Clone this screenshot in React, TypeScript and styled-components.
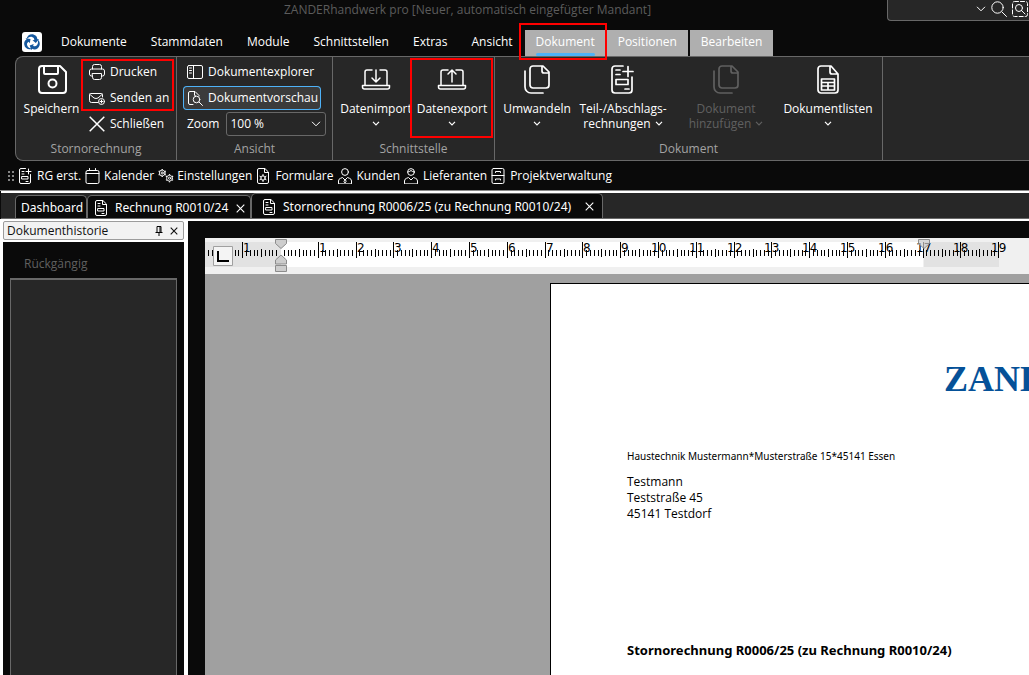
import React from 'react';
import styled, { createGlobalStyle, css } from 'styled-components';

const Global = createGlobalStyle`
  * { box-sizing: border-box; }
  html, body, #root { height: 100%; margin: 0; }
  body { background: #0a0a0a; color: #fff; overflow: hidden; font: 12px/16px "Open Sans", "Noto Sans", sans-serif; }
  button, input, select { font: inherit; color: inherit; margin: 0; }
  button { background: none; border: 0; padding: 0; white-space: nowrap; }
  svg { display: block; flex: none; }
`;

const Shell = styled.div`display: flex; flex-direction: column; height: 100%;`;

const TitleBar = styled.header`
  display: grid; grid-template-columns: 1fr auto 1fr; height: 28px; flex: none; color: #5c5c5c;
`;
const Title = styled.h1`
  margin: 0; padding: 2px 94px 0 0; font-size: 12px; font-weight: 400; line-height: 16px; white-space: nowrap;
`;
const SearchBox = styled.div`
  justify-self: end; display: flex; align-items: center; gap: 5px; width: 142px; height: 21px;
  padding: 0 1px 2px 4px; background: #272727; border: solid #686868; border-width: 0 0 1px 1px;
  border-radius: 0 0 0 4px; color: #fff;
`;
const SearchInput = styled.input`flex: 1; min-width: 0; border: 0; padding: 0; background: transparent; outline: 0;`;

const MenuBar = styled.nav`display: flex; align-items: flex-end; height: 28px; flex: none; padding-left: 22px;`;
const AppLogo = styled.button`align-self: center; width: 20px; height: 20px; margin-right: 7px;`;
const MenuTab = styled.button`height: 28px; padding: 0 12px;`;
const ContextTabs = styled.div`display: flex; gap: 2px;`;
const ContextTab = styled.button<{ $active?: boolean }>`
  position: relative; height: 26px; padding: 0 11px 2px; background: #afafaf;
  ${p => p.$active && css`
    margin-right: -2px; padding-right: 12px;
    &::before { content: ''; position: absolute; left: 11px; right: 12px; bottom: 0; height: 3px; border-radius: 2px; background: #4eb2f8; z-index: 1; }
  `}
`;
const Mark = styled.span<{ $inset: string; $height?: number }>`
  position: absolute; inset: ${p => p.$inset}; border: 2px solid #f00; pointer-events: none; z-index: 3;
  ${p => p.$height && css`height: ${p.$height}px;`}
`;

const Ribbon = styled.section`
  display: flex; height: 105px; flex: none; margin-left: 15px; background: #272727;
  border: solid #686868; border-width: 1px 0 1px 1px; border-radius: 8px 0 0 8px;
`;
const Group = styled.div<{ $width: number }>`
  display: flex; flex-direction: column; flex: none; width: ${p => p.$width}px; border-right: 1px solid #686868;
`;
const GroupBody = styled.div<{ $pad?: string }>`display: flex; flex: 1; padding: ${p => p.$pad ?? '0'};`;
const GroupLabel = styled.div`height: 19px; line-height: 16px; text-align: center; color: #a3a3a3;`;
const BigButton = styled.button<{ $width: number; $dim?: boolean }>`
  position: relative; display: flex; flex-direction: column; align-items: center; width: ${p => p.$width}px; flex: none;
  padding-top: 8px; line-height: 15px; color: ${p => (p.$dim ? '#606060' : '#fff')};
  & > svg:first-child { margin-bottom: 6px; }
`;
const SecondLine = styled.span`display: flex; align-items: center; justify-content: center; gap: 4px; height: 15px;`;
const Divider = styled.div<{ $gap?: number }>`width: 1px; margin: 5px 0 5px ${p => p.$gap ?? 0}px; background: #686868;`;
const Stack = styled.div`position: relative; display: flex; flex-direction: column; padding-top: 2px;`;
const SmallButton = styled.button<{ $on?: boolean }>`
  display: flex; align-items: center; gap: 5px; height: 26px; padding: 0 2px 0 4px; text-align: left;
  ${p => p.$on && css`
    height: 24px; margin: 1px 0; padding-right: 3px; border-radius: 4px; background: #3b3b3b; box-shadow: inset 0 0 0 1px #4eb2f8;
  `}
`;
const ZoomRow = styled.label`display: flex; align-items: center; gap: 7px; height: 26px; padding-left: 4px;`;
const SelectWrap = styled.span`
  position: relative; width: 100px; flex: none; margin-right: -12px;
  & > svg { position: absolute; right: 5px; top: 9px; pointer-events: none; }
`;
const Select = styled.select`
  display: block; width: 100%; height: 24px; padding: 0 3px; appearance: none; background: #272727; border: 1px solid #686868; border-radius: 3px;
`;

const QuickBar = styled.nav`
  display: flex; align-items: center; gap: 4px; height: 30px; flex: none; padding-left: 6px;
  border-bottom: 1px solid #8a8a8a;
`;
const QuickButton = styled.button`display: flex; align-items: center; gap: 3px;`;

const DocTabs = styled.div`
  display: flex; align-items: flex-end; height: 28px; flex: none; margin-left: 1px; padding-left: 14px;
  background: #272727; border-top: 2px solid #fff; border-bottom: 1px solid #686868; font-family: "Noto Sans", sans-serif;
`;
const DocTab = styled.div<{ $active?: boolean; $width: number }>`
  display: flex; align-items: center; justify-content: space-between; flex: none; width: ${p => p.$width}px;
  height: ${p => (p.$active ? 25 : 23)}px; padding: ${p => (p.$active ? '1px 8px 0 9px' : '2px 5px 0')};
  background: #0a0a0a; border: solid #686868; border-width: 1px 1px 0 1px; border-radius: 5px 5px 0 0;
`;
const TabTitle = styled.button`display: flex; align-items: center; gap: 6px;`;

const Main = styled.main`display: flex; flex: 1; min-height: 0; background: #fff;`;
const Side = styled.aside`display: flex; flex-direction: column; width: 181px; flex: none; margin: 2px 4px 0 3px;`;
const SideHead = styled.div`
  display: flex; align-items: center; gap: 7px; height: 19px; padding: 0 5px 0 3px; flex: none; margin-bottom: 2px;
  background: #f2f2f2; border: 1px solid #9c9c9c; border-radius: 2px; color: #111;
  h2 { flex: 1; margin: 0; font-size: 12px; font-weight: 400; line-height: 16px; white-space: nowrap; }
`;
const SideBody = styled.div`display: flex; flex-direction: column; flex: 1; padding: 14px 7px 0; background: #0a0a0a;`;
const UndoLabel = styled.button`align-self: flex-start; padding: 0 14px; color: #606060;`;
const UndoList = styled.div`flex: 1; margin-top: 6px; background: #272727; border: 1px solid #686868; border-top-width: 2px; border-bottom: 0;`;

const Editor = styled.section`
  display: flex; flex-direction: column; flex: 1; min-width: 0; margin-top: 2px; padding: 17px 0 0 17px; background: #0a0a0a;
`;
const RulerBar = styled.div`height: 36px; flex: none; overflow: hidden; background: #f0f0f0;`;
const Canvas = styled.div`display: flex; flex: 1; padding: 9px 0 0 345px; background: #a0a0a0; overflow: hidden;`;
const Page = styled.article`
  flex: 1; min-width: 0; padding: 0 0 0 76px; background: #fff; border: solid #000; border-width: 1px 0 0 1px; color: #000; white-space: nowrap; overflow: hidden;
`;
const Brand = styled.div`
  height: 38px; margin: 76px 0 0 317px; color: #055198; font: 700 36px/38px "Liberation Serif", serif;
`;
const Sender = styled.p`margin: 50px 0 0; font: 10px/16px "Noto Sans", sans-serif;`;
const Address = styled.address`margin-top: 10px; font-style: normal; line-height: 16px;`;
const Subject = styled.h2`margin: 120px 0 0; font: 700 13px/16px "Noto Sans", sans-serif;`;

type IconProps = { size?: number; children: React.ReactNode; w?: number; box?: string };
const Icon = ({ size = 16, children, w = 1, box = '0 0 16 16' }: IconProps) => (
  <svg width={size} height={size} viewBox={box} fill="none" stroke="currentColor" strokeWidth={w} strokeLinecap="round" strokeLinejoin="round" aria-hidden>{children}</svg>
);
const Chevron = ({ wide }: { wide?: boolean }) => wide ? (
  <svg width="10" height="6" viewBox="0 0 10 6" fill="none" stroke="currentColor" aria-hidden><path d="M1 .8 5 4.8 9 .8" /></svg>
) : (
  <svg width="8" height="5" viewBox="0 0 8 5" fill="none" stroke="currentColor" strokeWidth="1.2" aria-hidden><path d="M1 .8 4 3.8 7 .8" /></svg>
);
const Cross = ({ size = 9 }: { size?: number }) => (
  <svg width={size} height={size} viewBox={`0 0 ${size} ${size}`} stroke="currentColor" strokeWidth={size > 10 ? 1.5 : 1.1} aria-hidden>
    <path d={`M.7.7 ${size - 0.7} ${size - 0.7}M${size - 0.7}.7.7 ${size - 0.7}`} />
  </svg>
);
const Save = () => <Icon size={30} box="0 0 30 30" w={2}><path d="M5 1h18l6 6v18a3 3 0 0 1-3 3H5a3 3 0 0 1-3-3V4a3 3 0 0 1 3-3ZM7 1v7a1 1 0 0 0 1 1h12a1 1 0 0 0 1-1V1" /><circle cx="15.5" cy="18.5" r="4" /></Icon>;
const Laptop = ({ up }: { up?: boolean }) => (
  <Icon size={30} box="0 0 30 30" w={1.5}><path d="M11 5H6a2 2 0 0 0-2 2v13M26 20V7a2 2 0 0 0-2-2h-5M1.500 20.500h27V22a2 2 0 0 1-2 2h-23a2 2 0 0 1-2-2Z" />
    <path d={up ? 'M15 17V5M11 9l4-4 4 4' : 'M15 5v12M11 13l4 4 4-4'} /></Icon>
);
const Copies = () => <Icon size={30} box="0 0 30 30" w={1.7}><path d="M11 1h10l6 6v13a3 3 0 0 1-3 3H11a3 3 0 0 1-3-3V4a3 3 0 0 1 3-3ZM20 1v5a2 2 0 0 0 2 2h5M3 6v16a6 6 0 0 0 6 6h12" /></Icon>;
const PartInvoice = () => <Icon size={30} box="0 0 30 30" w={1.7}><path d="M15 1H7a3 3 0 0 0-3 3v21a3 3 0 0 0 3 3h14a3 3 0 0 0 3-3V12M20 1.500v10M15 6.500h10M8 5h4M8 9.500h4M8 14.500h12v5H8ZM17 24h4" /></Icon>;
const TableDoc = () => <Icon size={30} box="0 0 30 30" w={1.7}><path d="M8 1h10l7 8v16a3 3 0 0 1-3 3H8a3 3 0 0 1-3-3V4a3 3 0 0 1 3-3ZM17 1v6a2 2 0 0 0 2 2h6M8.500 14h13v11h-13ZM8.500 17.500h13M8.500 21h13M15 17.500V25" /></Icon>;
const Printer = () => <Icon><path d="M3.500 5V2.500a2 2 0 0 1 2-2h5a2 2 0 0 1 2 2V5M3.500 12H2.500a2 2 0 0 1-2-2V7a2 2 0 0 1 2-2h11a2 2 0 0 1 2 2v3a2 2 0 0 1-2 2h-1M3.500 9.500h9v4a2 2 0 0 1-2 2h-5a2 2 0 0 1-2-2Z" /></Icon>;
const MailPlus = () => <Icon><path d="M9 12.500H2.500a2 2 0 0 1-2-2v-6a1 1 0 0 1 1-1h11a1 1 0 0 1 1 1V7M1 4.500 5 8q2 1 4 0l4-3.500M12.500 10v3M11 11.500h3" /><circle cx="12.500" cy="11.500" r="3" /></Icon>;
const Explorer = () => <Icon><path d="M2 1.500h12a1.500 1.500 0 0 1 1.500 1.500v10a1.500 1.500 0 0 1-1.500 1.500H2A1.500 1.500 0 0 1 .5 13V3A1.500 1.500 0 0 1 2 1.500ZM6.500 1.500v13M2.500 4h2M2.500 6.500h2M2.500 9h2" /></Icon>;
const Preview = () => <Icon><path d="M6 14.500H3A1.500 1.500 0 0 1 1.500 13V3A1.500 1.500 0 0 1 3 1.500h5l4 4V6M7.500 1.500V5q0 1 1 1M12 12l3.500 3.500" /><circle cx="9.500" cy="9.500" r="3.300" /></Icon>;
const Invoice = ({ plus }: { plus?: boolean }) => <Icon>{plus
  ? <path d="M7.500.5H3A1.500 1.500 0 0 0 1.500 2v12A1.500 1.500 0 0 0 3 15.500h8a1.500 1.500 0 0 0 1.500-1.500V6.500M10.500 1v5M8 3.500h5M4 3.500h2M4 6h2M4 8.500h6V11H4ZM8 13.500h2" />
  : <path d="M9.500.5H4a1.500 1.500 0 0 0-1.500 1.500v12A1.500 1.500 0 0 0 4 15.500h8a1.500 1.500 0 0 0 1.500-1.500V4.500ZM9.500.5v4h4M5 3.500h2M5 6h2M5 8.500h6V11H5ZM9 13.500h2" />}</Icon>;
const Calendar = () => <Icon><path d="M2.500 2.500h10A1.500 1.500 0 0 1 14 4v10a1.500 1.500 0 0 1-1.500 1.500h-10A1.500 1.500 0 0 1 1 14V4a1.500 1.500 0 0 1 1.500-1.500ZM1 5.500h13M4.500 .5v2M10.500 .5v2" /></Icon>;
const Gear = ({ x, y }: { x: number; y: number }) => (
  <g transform={`translate(${x} ${y})`} strokeWidth=".9">
    <circle r="2.900" /><circle r="1.100" />
    {[0, 60, 120, 180, 240, 300].map(a => <path key={a} d="M0-3v-1.100" strokeWidth="1.300" strokeLinecap="butt" transform={`rotate(${a})`} />)}
  </g>
);
const Gears = () => <Icon><Gear x={4.2} y={5} /><Gear x={11.5} y={10.2} /></Icon>;
const FormDoc = () => <Icon><path d="M8.500.5H3A1.500 1.500 0 0 0 1.500 2v12A1.500 1.500 0 0 0 3 15.500h8a1.500 1.500 0 0 0 1.500-1.500V4.500ZM8.500.5v4h4M7 6.500v1.500M7 12v1.500M3.900 8.300l1.200.7M10.100 8.300l-1.200.7M3.900 11.700l1.200-.7M10.100 11.700l-1.200-.7" /><circle cx="7" cy="10" r="2.200" /></Icon>;
const Person = ({ cap }: { cap?: boolean }) => <Icon><circle cx="7" cy="4" r="3.400" /><path d="M.5 15.500V13q0-2 2-2.700l2-.8L7 12l2.500-2.500 2 .8q2 .7 2 2.700v2.500Z" />{cap ? <path d="M4 4q2-.5 3-1.500Q8 3.500 10 4" /> : <path d="M7 12l-1 1.500 1 1.500 1-1.500Z" />}</Icon>;
const Cabinet = () => <Icon><path d="M2.500.5h9A1.500 1.500 0 0 1 13 2v12a1.500 1.500 0 0 1-1.500 1.500h-9A1.500 1.500 0 0 1 1 14V2A1.500 1.500 0 0 1 2.500.5ZM1 7.500h12M4.500 4.500v-1h5v1M4.500 12v-1h5v1" /></Icon>;
const Magnifier = () => <Icon><circle cx="6.500" cy="6.500" r="5.700" /><path d="m11 11 4.500 4.500" /></Icon>;
const ScanSearch = () => <Icon><rect x=".5" y=".5" width="15" height="15" rx="2" strokeDasharray="4 2" /><circle cx="7" cy="7" r="3.500" /><path d="m9.500 9.500 3.500 3.500" /></Icon>;
const Grip = () => <svg width="8" height="12" viewBox="0 0 8 12" fill="#858585" aria-hidden>{[0, 4, 8].map(y => <path key={y} d={`M2 ${y + 1}h2v2H2zM6 ${y + 1}h2v2H6z`} />)}</svg>;
const Logo = () => (
  <svg width="20" height="20" viewBox="0 0 20 20" aria-hidden><rect width="20" height="20" rx="3" fill="#fff" />
    {[0, 120, 240].map(a => (
      <g key={a} transform={`rotate(${a} 10 10.500)`} fill="#15589e">
        <path d="M4.500 7.500C5 3.500 8.500 1.500 12 2.700c2.300.8 3.400 2.600 3.300 4.600l1.700-.3-3.200 4-3.300-2.800 1.800-.3c0-1.500-.7-2.700-2.300-3C7.800 4.500 6 5.500 4.500 7.500Z" />
      </g>
    ))}
  </svg>
);
const Pin = () => <svg width="8" height="10" viewBox="0 0 8 10" stroke="#000" fill="none" aria-hidden><path d="M2 6V.5h4V6M.5 6.500h7M4 6.500V10M5 .5V6" /></svg>;

const CM = 37.8;
const ORIGIN = 75;
const tickX = (cm: number) => Math.round(ORIGIN + cm * CM);
const Ruler = () => {
  const ticks = Array.from({ length: 210 }, (_, i) => i - 19).filter(i => i !== 0);
  return (
    <svg width="824" height="36" viewBox="0 0 824 36" fontFamily="DejaVu Sans, sans-serif" fontSize="12" role="img" aria-label="Lineal">
      <path d="M0 4h76v25H0zM719 4h75v25h-75z" fill="#e2e2e2" />
      <path d="M76 4h642v25H76z" fill="#fff" />
      {ticks.map(i => {
        const major = i % 10 === 0;
        const half = i % 5 === 0;
        return <rect key={i} x={tickX(i / 10)} width="1" y={major ? 4 : half ? 11 : 12} height={major ? 16 : half ? 8 : 6} fill="#000" />;
      })}
      <text x={tickX(-1) + 1} y="14">1</text>
      {Array.from({ length: 19 }, (_, i) => i + 1).map(n => <text key={n} x={tickX(n) + (n > 9 ? -7 : 1)} y="14">{n}</text>)}
      <path d="M8.500 8.500h19v19h-19z" fill="#f4f4f4" stroke="#a0a0a0" />
      <path d="M13 13v10h11" fill="none" stroke="#000" strokeWidth="2" />
      <g fill="#cdcdcd" stroke="#8c8c8c">
        <path d="M70.500 1.500h11v4L76 10.500l-5.500-5zM70.500 26v-4L76 17l5.500 5v4zM70.500 27.500h11v6h-11z" />
        <path d="M713.500 1.500h11v4l-5.500 5-5.500-5z" fillOpacity=".7" />
      </g>
    </svg>
  );
};

const menu = ['Dokumente', 'Stammdaten', 'Module', 'Schnittstellen', 'Extras', 'Ansicht'];
const quick: [string, React.ReactNode][] = [
  ['RG erst.', <Invoice plus />], ['Kalender', <Calendar />], ['Einstellungen', <Gears />], ['Formulare', <FormDoc />],
  ['Kunden', <Person />], ['Lieferanten', <Person cap />], ['Projektverwaltung', <Cabinet />],
];

export default function App() {
  return (
    <Shell>
      <Global />
      <TitleBar>
        <span />
        <Title>ZANDERhandwerk pro [Neuer, automatisch eingefügter Mandant]</Title>
        <SearchBox>
          <SearchInput aria-label="Suche" />
          <Chevron wide />
          <button aria-label="Suchen"><Magnifier /></button>
          <button aria-label="Erweiterte Suche"><ScanSearch /></button>
        </SearchBox>
      </TitleBar>
      <MenuBar>
        <AppLogo aria-label="Anwendungsmenü"><Logo /></AppLogo>
        {menu.map(m => <MenuTab key={m}>{m}</MenuTab>)}
        <ContextTabs>
          <ContextTab $active>Dokument<Mark $inset="-7px 0 -4px -6px" /></ContextTab>
          <ContextTab>Positionen</ContextTab>
          <ContextTab>Bearbeiten</ContextTab>
        </ContextTabs>
      </MenuBar>
      <Ribbon>
        <Group $width={161}>
          <GroupBody $pad="0 0 0 2px">
            <BigButton $width={67}><Save />Speichern</BigButton>
            <Stack>
              <Mark $inset="2px -3px auto -4px" $height={52} />
              <SmallButton><Printer />Drucken</SmallButton>
              <SmallButton><MailPlus />Senden an</SmallButton>
              <SmallButton><Cross size={16} />Schließen</SmallButton>
            </Stack>
          </GroupBody>
          <GroupLabel>Stornorechnung</GroupLabel>
        </Group>
        <Group $width={156}>
          <GroupBody $pad="0 6px">
            <Stack>
              <SmallButton><Explorer />Dokumentexplorer</SmallButton>
              <SmallButton $on><Preview />Dokumentvorschau</SmallButton>
              <ZoomRow>Zoom
                <SelectWrap><Select defaultValue="100"><option value="100">100 %</option></Select><Chevron wide /></SelectWrap>
              </ZoomRow>
            </Stack>
          </GroupBody>
          <GroupLabel>Ansicht</GroupLabel>
        </Group>
        <Group $width={162}>
          <GroupBody $pad="0 0 0 5px">
            <BigButton $width={76}><Laptop />Datenimport<SecondLine><Chevron /></SecondLine></BigButton>
            <BigButton $width={76}><Laptop up />Datenexport<SecondLine><Chevron /></SecondLine><Mark $inset="1px -3px 3px -4px" /></BigButton>
          </GroupBody>
          <GroupLabel>Schnittstelle</GroupLabel>
        </Group>
        <Group $width={388}>
          <GroupBody $pad="0 0 0 4px">
            <BigButton $width={76}><Copies />Umwandeln<SecondLine><Chevron /></SecondLine></BigButton>
            <BigButton $width={96}><PartInvoice />Teil-/Abschlags-<SecondLine>rechnungen<Chevron /></SecondLine></BigButton>
            <Divider $gap={7} />
            <BigButton $width={96} $dim><Copies />Dokument<SecondLine>hinzufügen<Chevron /></SecondLine></BigButton>
            <Divider />
            <BigButton $width={108}><TableDoc />Dokumentlisten<SecondLine><Chevron /></SecondLine></BigButton>
          </GroupBody>
          <GroupLabel>Dokument</GroupLabel>
        </Group>
      </Ribbon>
      <QuickBar>
        <Grip />
        {quick.map(([label, icon]) => <QuickButton key={label}>{icon}{label}</QuickButton>)}
      </QuickBar>
      <DocTabs>
        <DocTab $width={72}><TabTitle>Dashboard</TabTitle></DocTab>
        <DocTab $width={164}><TabTitle><Invoice />Rechnung R0010/24</TabTitle><button aria-label="Schließen"><Cross /></button></DocTab>
        <DocTab $active $width={352}><TabTitle><Invoice />Stornorechnung R0006/25 (zu Rechnung R0010/24)</TabTitle><button aria-label="Schließen"><Cross /></button></DocTab>
      </DocTabs>
      <Main>
        <Side>
          <SideHead><h2>Dokumenthistorie</h2><button aria-label="Anheften"><Pin /></button><button aria-label="Ausblenden"><Cross size={8} /></button></SideHead>
          <SideBody>
            <UndoLabel disabled>Rückgängig</UndoLabel>
            <UndoList />
          </SideBody>
        </Side>
        <Editor>
          <RulerBar><Ruler /></RulerBar>
          <Canvas>
            <Page>
              <Brand>ZANDER</Brand>
              <Sender>Haustechnik Mustermann*Musterstraße 15*45141 Essen</Sender>
              <Address>Testmann<br />Teststraße 45<br />45141 Testdorf</Address>
              <Subject>Stornorechnung R0006/25 (zu Rechnung R0010/24)</Subject>
            </Page>
          </Canvas>
        </Editor>
      </Main>
    </Shell>
  );
}
